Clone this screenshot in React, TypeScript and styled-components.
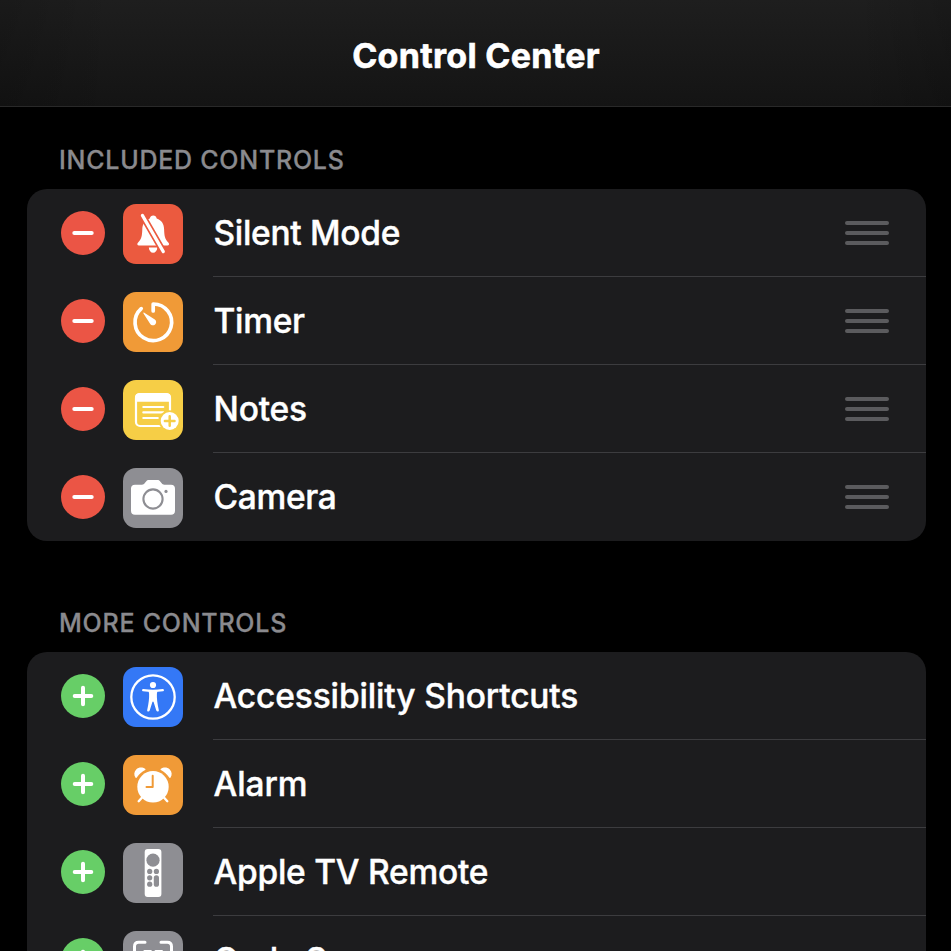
import React from 'react';
import styled, { createGlobalStyle } from 'styled-components';

const GlobalStyle = createGlobalStyle`
  *, *::before, *::after { box-sizing: border-box; }
  html, body { margin: 0; background: #000; overflow: hidden; }
`;

const Screen = styled.main`
  width: 951px;
  height: 951px;
  overflow: hidden;
  background: #000;
  color: #fff;
  font-family: Inter, "Liberation Sans", sans-serif;
  -webkit-font-smoothing: antialiased;
`;

const NavBar = styled.header`
  height: 107px;
  padding: 6px 0 0 1px;
  display: flex;
  align-items: center;
  justify-content: center;
  border-bottom: 1px solid #292929;
  background:
    linear-gradient(90deg, rgba(0, 0, 0, 0.15), transparent 12%, transparent 90%, rgba(0, 0, 0, 0.15)),
    linear-gradient(#1e1e1e, #141414);
`;

const Title = styled.h1`
  margin: 0;
  font-size: 34px;
  line-height: 40px;
  font-weight: 700;
  letter-spacing: 0.3px;
  -webkit-text-stroke: 0.6px currentColor;
`;

const Section = styled.section`
  padding: 38px 25px 0 27px;
  & + & { padding-top: 67px; }
`;

const SectionTitle = styled.h2`
  margin: 0 0 14px 32px;
  height: 30px;
  line-height: 30px;
  font-size: 25px;
  font-weight: 500;
  letter-spacing: 0.75px;
  color: #8a8a8e;
  white-space: nowrap;
  -webkit-text-stroke: 0.3px currentColor;
`;

const Card = styled.ul`
  margin: 0;
  padding: 0;
  list-style: none;
  border-radius: 20px;
  overflow: hidden;
  background: #1c1c1e;
`;

const Row = styled.li`
  height: 88px;
  padding-left: 34px;
  display: flex;
  align-items: center;
`;

const ToggleButton = styled.button<{ $color: string }>`
  width: 44px;
  height: 44px;
  margin-right: 18px;
  padding: 0;
  border: 0;
  border-radius: 50%;
  flex: none;
  display: flex;
  background: ${(p) => p.$color};
`;

const Tile = styled.span<{ $color: string }>`
  width: 60px;
  height: 60px;
  margin: 2px 30px 0 0;
  border-radius: 13px;
  flex: none;
  display: flex;
  background: ${(p) => p.$color};
`;

const RowBody = styled.div`
  flex: 1;
  height: 88px;
  padding-right: 37px;
  display: flex;
  align-items: center;
  justify-content: space-between;
  border-bottom: 1px solid #3c3c3f;
  ${Row}:last-child & { border-bottom-color: transparent; }
`;

const Label = styled.span<{ $spacing: number }>`
  padding-left: 0.5px;
  font-size: 33.5px;
  line-height: 44px;
  font-weight: 500;
  letter-spacing: ${(p) => p.$spacing}px;
  white-space: nowrap;
  -webkit-text-stroke: 0.4px currentColor;
`;

const Grip = styled.span`
  width: 44px;
  height: 24px;
  display: flex;
  flex-direction: column;
  justify-content: space-between;
`;

const GripBar = styled.span`
  height: 4px;
  border-radius: 2px;
  background: #5b5b5e;
`;

const ORANGE = '#f09a37';
const YELLOW = '#f6ce46';
const GRAY = '#8e8e93';

const Glyph = ({ children }: { children: React.ReactNode }) => (
  <svg width="60" height="60" viewBox="0 0 60 60" fill="none" strokeLinecap="round" strokeLinejoin="round">
    {children}
  </svg>
);

const BellSlash = () => (
  <Glyph>
    <path
      fill="#fff"
      d="M30.3 11.5c-1.900 0-3.100 1.200-3.500 3-5 1.700-7.300 5.400-7.500 10.500-.2 7.400-.9 10.200-4.200 13.500-1.400 1.400-.9 3 .9 3h28.400c1.800 0 2.200-1.600.9-3-3.300-3.400-4-6.100-4.200-13.500-.1-5.100-2.400-8.800-7.400-10.500-.4-1.800-1.600-3-3.400-3z"
    />
    <path fill="#fff" d="M25.800 43.400h8.600c-.3 3.200-2 5.300-4.300 5.300s-4-2.100-4.300-5.300z" />
    <path stroke="#eb5a3f" strokeWidth="6.600" d="M19.400 11.400 40.300 47.600" />
    <path stroke="#fff" strokeWidth="3.200" d="M19.400 11.400 40.300 47.600" />
  </Glyph>
);

const TimerDial = () => (
  <Glyph>
    <path stroke="#fff" strokeWidth="3.700" d="M30.200 19V12A18.300 18.300 0 1 1 18.200 16.600" />
    <path
      fill="#fff"
      d="M21.300 20.800c-.6-.5-1.200.1-.8.8l6.600 10.200c1.200 1.800 3.500 2 5 .6 1.600-1.500 1.400-3.800-.3-5z"
    />
  </Glyph>
);

const NotePlus = () => (
  <Glyph>
    <rect x="13" y="14.200" width="34" height="31.800" rx="4" stroke="#fff" strokeWidth="2.200" />
    <path fill="#fff" d="M12 17.300c0-2.400 1.600-4 4-4h28c2.400 0 4 1.600 4 4v4.400H12z" />
    <path stroke="#fff" strokeWidth="2.100" d="M20.300 27h20M20.300 32.400h20M20.300 38h14.500" />
    <circle cx="46.700" cy="41" r="10.800" fill={YELLOW} />
    <circle cx="46.700" cy="41" r="9" fill="#fff" />
    <path stroke={YELLOW} strokeWidth="2.500" d="M46.700 36.200v9.600M41.900 41h9.600" />
  </Glyph>
);

const CameraGlyph = () => (
  <Glyph>
    <path
      fill="#fff"
      d="M12 16.700h7c1.200 0 1.800-.4 2.600-1.400l1.500-1.900c.8-1 1.600-1.400 2.900-1.400h8.300c1.300 0 2.100.4 2.900 1.400l1.500 1.900c.8 1 1.400 1.400 2.600 1.400H48c2.600 0 4 1.400 4 4v22c0 2.600-1.400 4-4 4H12c-2.600 0-4-1.400-4-4v-22c0-2.600 1.400-4 4-4z"
    />
    <circle cx="30" cy="31" r="9.600" stroke={GRAY} strokeWidth="2.100" />
    <circle cx="43" cy="23.400" r="1.600" fill={GRAY} />
  </Glyph>
);

const PersonCircle = () => (
  <Glyph>
    <circle cx="30" cy="30" r="21.700" stroke="#fff" strokeWidth="2.300" />
    <circle cx="30" cy="18" r="3.100" fill="#fff" />
    <path stroke="#fff" strokeWidth="2.300" d="M20.200 23.200Q30 24.800 39.800 23.200" />
    <path
      fill="#fff"
      d="M25.500 23.500h9l-.6 3.200c-.2 4.400.4 9.300 1.900 16.200.4 1.700-1.900 2.300-2.500.6L30.600 35c-.3-.8-.9-.8-1.200 0l-2.700 8.500c-.6 1.700-2.900 1.100-2.500-.6 1.500-6.900 2.100-11.800 1.900-16.200z"
    />
  </Glyph>
);

const AlarmClock = () => (
  <Glyph>
    <path stroke="#fff" strokeWidth="2.400" d="M19.500 42 15.700 46.200M40.500 42l3.800 4.200" />
    <circle cx="30" cy="31.800" r="15.700" fill="#fff" />
    <path
      fill="#fff"
      d="M12.600 22.700c-1.900-2.500-1.700-6 .6-8.300 2.500-2.500 6.300-2.600 8.900-.6.5.4.5.9 0 1.200-3.400 1.700-6.200 4.300-8.300 7.600-.3.500-.8.600-1.200.1zM47.400 22.700c1.900-2.500 1.700-6-.6-8.300-2.500-2.500-6.300-2.600-8.900-.6-.5.4-.5.9 0 1.200 3.400 1.700 6.200 4.300 8.300 7.600.3.500.8.600 1.200.1z"
    />
    <path stroke={ORANGE} strokeWidth="2" d="M29.700 20.800V32h-6.200" />
  </Glyph>
);

const RemoteGlyph = () => (
  <Glyph>
    <rect x="21.700" y="6" width="16.700" height="48" rx="3" fill="#fff" />
    <g fill={GRAY}>
      <circle cx="30" cy="17.200" r="6.600" />
      <circle cx="26.700" cy="28.400" r="2.600" />
      <circle cx="33.400" cy="28.400" r="2.600" />
      <circle cx="26.700" cy="34.800" r="2.600" />
      <circle cx="26.700" cy="41.200" r="2.600" />
      <rect x="30.800" y="32.200" width="5.200" height="11.600" rx="2.600" />
    </g>
  </Glyph>
);

const CodeScan = () => (
  <Glyph>
    <path
      stroke="#fff"
      strokeWidth="3"
      d="M11.500 20v-4.500q0-4.200 4.200-4.200H22M38 11.300h6.300q4.200 0 4.200 4.200V20M11.500 40v4.500q0 4.200 4.200 4.200H22M38 48.700h6.300q4.200 0 4.200-4.200V40"
    />
    <path
      stroke="#fff"
      strokeWidth="2.200"
      d="M21.500 20h6.300v6.500h-6.300zM32.600 20h6.300v6.500h-6.300zM21.500 32h6.300v6.500h-6.300zM33 33h2M37 37h2"
    />
  </Glyph>
);

const ToggleGlyph = ({ add }: { add: boolean }) => (
  <svg width="44" height="44" viewBox="0 0 44 44" fill="none" stroke="#fff" strokeWidth="4" strokeLinecap="round">
    <path d={add ? 'M13.700 22h16.600M22 13.700v16.600' : 'M13.300 22h17.400'} />
  </svg>
);

type Control = { name: string; color: string; icon: React.ReactNode; spacing: number };

const included: Control[] = [
  { name: 'Silent Mode', color: '#eb5a3f', icon: <BellSlash />, spacing: -0.3 },
  { name: 'Timer', color: ORANGE, icon: <TimerDial />, spacing: -0.3 },
  { name: 'Notes', color: YELLOW, icon: <NotePlus />, spacing: -0.2 },
  { name: 'Camera', color: GRAY, icon: <CameraGlyph />, spacing: -0.3 },
];

const more: Control[] = [
  { name: 'Accessibility Shortcuts', color: '#3478f6', icon: <PersonCircle />, spacing: -0.14 },
  { name: 'Alarm', color: ORANGE, icon: <AlarmClock />, spacing: -0.1 },
  { name: 'Apple TV Remote', color: GRAY, icon: <RemoteGlyph />, spacing: -0.25 },
  { name: 'Code Scanner', color: GRAY, icon: <CodeScan />, spacing: -0.4 },
];

const ControlList = ({ items, add = false }: { items: Control[]; add?: boolean }) => (
  <Card>
    {items.map((item) => (
      <Row key={item.name}>
        <ToggleButton $color={add ? '#67ce67' : '#eb5545'} aria-label={`${add ? 'Add' : 'Remove'} ${item.name}`}>
          <ToggleGlyph add={add} />
        </ToggleButton>
        <Tile $color={item.color}>{item.icon}</Tile>
        <RowBody>
          <Label $spacing={item.spacing}>{item.name}</Label>
          {!add && (
            <Grip>
              <GripBar />
              <GripBar />
              <GripBar />
            </Grip>
          )}
        </RowBody>
      </Row>
    ))}
  </Card>
);

export default function App() {
  return (
    <>
      <GlobalStyle />
      <Screen>
        <NavBar>
          <Title>Control Center</Title>
        </NavBar>
        <Section>
          <SectionTitle>INCLUDED CONTROLS</SectionTitle>
          <ControlList items={included} />
        </Section>
        <Section>
          <SectionTitle>MORE CONTROLS</SectionTitle>
          <ControlList items={more} add />
        </Section>
      </Screen>
    </>
  );
}
